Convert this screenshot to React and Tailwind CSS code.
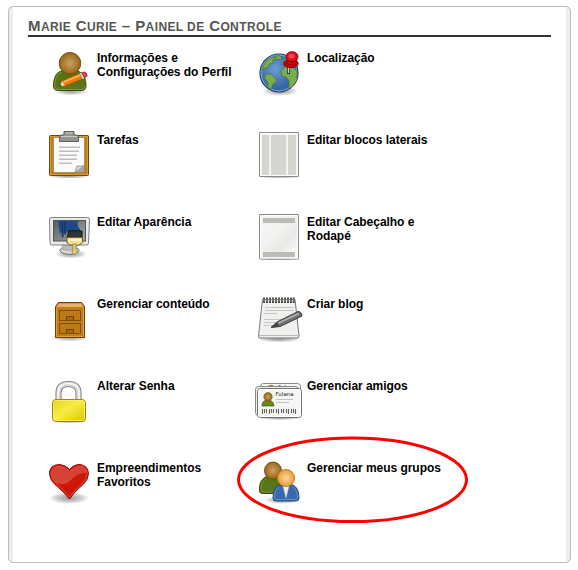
const fontStack = "font-['Liberation_Sans',Arial,sans-serif]";

function Defs() {
  return (
    <svg className="absolute h-0 w-0" aria-hidden="true">
      <defs>
        <radialGradient id="shadow"><stop offset="0" stopColor="#000" stopOpacity=".4" /><stop offset=".6" stopColor="#000" stopOpacity=".2" /><stop offset="1" stopColor="#000" stopOpacity="0" /></radialGradient>
        <radialGradient id="brown"><stop offset="0" stopColor="#cda163" /><stop offset="1" stopColor="#986618" /></radialGradient>
        <radialGradient id="gold"><stop offset="0" stopColor="#f9d59b" /><stop offset="1" stopColor="#e5a03a" /></radialGradient>
        <radialGradient id="ocean" cx=".4" cy=".4"><stop offset="0" stopColor="#6d9cd4" /><stop offset="1" stopColor="#3465a4" /></radialGradient>
        <linearGradient id="green" x1="0" y1="0" x2="0" y2="1"><stop offset="0" stopColor="#55720f" /><stop offset="1" stopColor="#5a7820" /></linearGradient>
        <linearGradient id="paper" x1="0" y1="0" x2="1" y2="1"><stop offset="0" stopColor="#f6f6f5" /><stop offset=".4" stopColor="#f2f2f0" /><stop offset=".65" stopColor="#e9e9e7" /><stop offset="1" stopColor="#fff" /></linearGradient>
        <linearGradient id="yellow" x1="0" y1="0" x2="1" y2="1"><stop offset="0" stopColor="#e6d21c" /><stop offset=".45" stopColor="#f8ec42" /><stop offset="1" stopColor="#dcc500" /></linearGradient>
        <linearGradient id="screen" x1="0" y1="0" x2="1" y2="1"><stop offset="0" stopColor="#565d62" /><stop offset="1" stopColor="#a5a9a8" /></linearGradient>
        <linearGradient id="gloss" x1="0" y1="0" x2="0" y2="1"><stop offset="0" stopColor="#fff" stopOpacity=".18" /><stop offset="1" stopColor="#fff" stopOpacity=".2" /></linearGradient>
      </defs>
    </svg>
  );
}

function Icon({ children }) {
  return <svg className="h-12 w-[52px] shrink-0" viewBox="5 8 52 48">{children}</svg>;
}

function Profile() {
  return (
    <Icon>
      <ellipse cx="31" cy="51" rx="17" ry="4.500" fill="url(#shadow)" />
      <path d="M21 31C16 33 13.500 38 13.500 46q0 4.500 5 4.500H41q5 0 5-4.500C46 38 43 33 38 31Z" fill="url(#green)" stroke="#36500a" />
      <path d="M21.500 32.500C17 34 14.500 40 14.500 46q0 3.500 4 3.500H41q4 0 4-3.500" fill="none" stroke="#84a044" strokeWidth=".8" />
      <circle cx="30" cy="23.300" r="10.800" fill="url(#brown)" stroke="#7a500f" />
      <path d="M19.500 45.800 22.500 40.500 39.500 33.300 42.500 39 25.500 46Z" fill="#f57900" stroke="#9b4a05" strokeWidth=".8" />
      <path d="M23.500 42.200 40 35.300" stroke="#fcaf5e" strokeWidth="2" />
      <path d="m19 46.300 3.500-5.800 3 5.500Z" fill="#f3d6ab" stroke="#8f5902" strokeWidth=".5" />
      <path d="m19 46.300 1.200-2 1.200 1.800Z" fill="#222" />
      <path d="m39.500 33.300 2.200-.9 3 5.600-2.200 1Z" fill="#d3d7cf" />
      <path d="m41.500 32.400 3.500-.4q2 1 2.200 4l-2.500 2Z" fill="#ef3b4e" stroke="#a40000" strokeWidth=".6" />
    </Icon>
  );
}

function Globe() {
  return (
    <Icon>
      <ellipse cx="30" cy="51" rx="18" ry="5" fill="url(#shadow)" />
      <circle cx="29" cy="33" r="19" fill="url(#ocean)" stroke="#23406b" strokeWidth="1.200" />
      <circle cx="29" cy="33" r="17.900" fill="none" stroke="#94b9e4" strokeWidth=".8" />
      <g fill="#7aad4c" stroke="#3f7325" strokeWidth=".6">
        <path d="M12.500 29q1.500-7 8-11l4-1 1 2-3 1 1 3-4 1-2 4-3 0-1 2Z" />
        <path d="m25 16.500 4-1 3 2-2 2-4 0Z" />
        <path d="m16 34 5 0 5 5 0 3-3 2-2 5-2.500-1-1-6-3-4Z" />
        <path d="m31 32 2-4 5-2 6 2 3 3 0 9-4 6-2 2-2-1 0-6-3-4-4-1Z" />
        <path d="m34 20 3-3 5 4 3 4-3 1-6-1-3 0Z" />
      </g>
      <path d="M38.500 27v7" stroke="#2e3436" strokeWidth="3" />
      <path d="M38.500 27v6" stroke="#d3d7cf" strokeWidth="1.300" />
      <ellipse cx="41" cy="23.500" rx="7.200" ry="4.200" fill="#c4000b" stroke="#850000" />
      <path d="M37 17v6q5 4 9.500 0v-6Z" fill="#cc0712" stroke="#850000" strokeWidth=".8" />
      <ellipse cx="42" cy="16.800" rx="6" ry="5" fill="#dc1019" stroke="#900000" />
      <ellipse cx="41.500" cy="16" rx="3.200" ry="2.500" fill="#f94444" />
    </Icon>
  );
}

function Tasks() {
  return (
    <Icon>
      <ellipse cx="29" cy="54" rx="21" ry="3" fill="url(#shadow)" />
      <rect x="9.500" y="13.500" width="39" height="40" rx="1" fill="#c17d11" stroke="#74480a" />
      <rect x="10.500" y="14.500" width="37" height="38" fill="none" stroke="#dca04a" strokeWidth=".8" />
      <path d="M13.500 15.500h31v35h-31Z" fill="#fafafa" stroke="#9c7d49" strokeWidth=".7" />
      <path d="M19 25.200h21M19 29.200h20M19 33.200h18M19 37.200h18M19 41.200h13" stroke="#bcbebb" strokeWidth="1.500" />
      <path d="M35 50.500 37 44q4 1 7.500-.5v7Z" fill="#a7aaa4" stroke="#777" strokeWidth=".5" />
      <path d="m37 44-2 6.500 9.500-7Q40 45 37 44Z" fill="#d9dbd8" stroke="#888" strokeWidth=".6" />
      <path d="M19.500 19.500v-5l1.500-1.500h3v-3.500h10V13h3l1.500 1.500v5Z" fill="#929592" stroke="#5e605d" />
      <path d="M21 14.500h16M25.500 11h7" stroke="#c9cbc8" />
    </Icon>
  );
}

function SideBlocks() {
  return (
    <Icon>
      <ellipse cx="29" cy="54.300" rx="22" ry="2.500" fill="url(#shadow)" />
      <rect x="9.500" y="10.500" width="39" height="44" rx=".5" fill="#f3f3f2" stroke="#888a85" />
      <rect x="10.500" y="11.500" width="37" height="42" fill="none" stroke="#fff" />
      <path d="M12 13h7v40h-7ZM21 13h15v40H21ZM38 13h8v40h-8Z" fill="#d3d7cf" />
    </Icon>
  );
}

function Appearance() {
  return (
    <Icon>
      <ellipse cx="31" cy="50" rx="16" ry="4.500" fill="url(#shadow)" />
      <ellipse cx="29.500" cy="46.500" rx="9.500" ry="3.800" fill="#d7d9d6" stroke="#777975" />
      <path d="m23 41-2 4q8 3 16-1l-2-3Z" fill="#bbbdb9" stroke="#888" strokeWidth=".5" />
      <path d="M11.500 13.500h36q2 0 2 2L48.500 39q0 2-2 2H12q-2 0-2-2L9.500 15.500q0-2 2-2Z" fill="#e9eae8" stroke="#81837f" />
      <rect x="13.500" y="16.500" width="32" height="20.500" fill="url(#screen)" stroke="#50555a" />
      <path d="M18 17h21q-1 3 1 8v5H28l-1-3-2 5-1-5-2 8-1-8-1 4-1-7Z" fill="#204a87" />
      <path d="m22 18 1 15M25 18v12" stroke="#183665" strokeWidth="1.500" />
      <path d="M38 18q-1 4 4 9" fill="none" stroke="#8f9797" />
      <path d="m29 26.500 13 .5v7H27Z" fill="#303236" stroke="#151719" />
      <path d="M27 33.500h15.500v5L39 41l-3 1-1-1h-5l-3-2Z" fill="#eedf9e" stroke="#786124" />
      <path d="M28.500 36h12.500" stroke="#fff9d3" strokeWidth="1.500" />
      <path d="m32.500 40 4 0-.5 4 1.500 4q-3 5-5.500 0l1-4Z" fill="#e2cb78" stroke="#8f7941" strokeWidth=".7" />
    </Icon>
  );
}

function HeaderFooter() {
  return (
    <Icon>
      <ellipse cx="29" cy="55" rx="22" ry="2.500" fill="url(#shadow)" />
      <rect x="9.500" y="10.500" width="39" height="44.500" rx=".5" fill="url(#paper)" stroke="#888a85" />
      <rect x="10.500" y="11.500" width="37" height="42.500" fill="none" stroke="#fff" />
      <path d="M13 14h32v5H13ZM13 48h32v5H13Z" fill="#babdb6" />
    </Icon>
  );
}

function Cabinet() {
  return (
    <Icon>
      <ellipse cx="30" cy="51.500" rx="19" ry="4" fill="url(#shadow)" />
      <path d="m18.500 16.500-3 4v31h29v-31l-3-4Z" fill="#c17d11" stroke="#6b4209" />
      <path d="m19 17.500-2.500 3.500h27L41 17.500Z" fill="#e6b270" />
      <path d="M16.500 21.500v29h27v-29" fill="none" stroke="#dfa452" strokeWidth=".8" />
      <rect x="19.500" y="24.500" width="21" height="10" fill="#bd7a12" stroke="#764a0c" strokeWidth=".9" />
      <rect x="19.500" y="37.500" width="21" height="10" fill="#bd7a12" stroke="#764a0c" strokeWidth=".9" />
      <path d="M26.500 34v-3.500h7V34M26.500 47v-3.500h7V47" fill="#a76810" stroke="#64400c" strokeWidth=".9" />
    </Icon>
  );
}

function Blog() {
  return (
    <Icon>
      <ellipse cx="29" cy="53" rx="22" ry="3.500" fill="url(#shadow)" />
      <path d="M12.500 13.500h32.500l4 36q.2 2.500-2 2.500H10q-2 0-1.500-2.500Z" fill="#f0f0ef" stroke="#777975" />
      <path d="M9 49.500h39.500" stroke="#b8bab6" />
      <path d="M15 21.500h29M15 24.500h29M14 27.500h13M14 33.500h26M14 36.500h22M13.500 39.500h16" stroke="#c4c6c3" />
      <path d="M14 11.500v5.500m3-5.500v5.500m3-5.500v5.500m3-5.500v5.500m3-5.500v5.500m3-5.500v5.500m3-5.500v5.500m3-5.500v5.500m3-5.500v5.500m3-5.500v5.500m2.800-5.500v5.500" stroke="#40433f" strokeWidth="2" />
      <path d="M14 12.500v3m3-3v3m3-3v3m3-3v3m3-3v3m3-3v3m3-3v3m3-3v3m3-3v3m3-3v3m2.800-3v3" stroke="#a9aba7" strokeWidth=".9" />
      <path d="m21 41.500 6-5.500L48 25.500q3.500 0 4 4.500L30 40.500Z" fill="#70736f" stroke="#363936" />
      <path d="m28.500 37 20-9.500" stroke="#b3b5b1" strokeWidth="1.500" />
      <path d="m21 41.500 6-5 2.500 4Z" fill="#444" />
    </Icon>
  );
}

function Lock() {
  return (
    <Icon>
      <ellipse cx="29" cy="53" rx="18" ry="2.500" fill="url(#shadow)" />
      <path d="M18.500 34V25q0-9 10-9t10 9v9" fill="none" stroke="#777975" strokeWidth="6" />
      <path d="M18.500 34V25q0-9 10-9t10 9v9" fill="none" stroke="#d3d7cf" strokeWidth="4.300" />
      <path d="M18 33V25q0-9.500 10.500-9.500t10.500 9.500v7" fill="none" stroke="#fafafa" strokeWidth="1.500" />
      <rect x="12.500" y="31.500" width="33" height="22" rx="3.500" fill="url(#yellow)" stroke="#a28405" />
      <rect x="13.500" y="32.500" width="31" height="20" rx="2.500" fill="none" stroke="#fff36b" strokeWidth=".8" />
    </Icon>
  );
}

function Friends() {
  return (
    <Icon>
      <rect x="10.500" y="15.500" width="40" height="28" rx="3" fill="#f5f5f4" stroke="#868884" />
      <circle cx="21" cy="21" r="4" fill="#a76813" />
      <text x="28" y="21" className="font-['DejaVu_Sans']" fontSize="5.500" fill="#333">Fulana</text>
      <rect x="5.500" y="18.500" width="43" height="29" rx="3" fill="#eee" stroke="#868884" />
      <ellipse cx="30" cy="50" rx="22" ry="2" fill="url(#shadow)" />
      <rect x="7.500" y="20.500" width="44" height="29" rx="3" fill="#f5f5f4" stroke="#6e716c" />
      <rect x="8.500" y="21.500" width="42" height="27" rx="2" fill="none" stroke="#fff" />
      <path d="M12 38q0-6 5.500-6 6 0 6.500 6Z" fill="#68861c" stroke="#405a0a" strokeWidth=".7" />
      <circle cx="18" cy="28.800" r="4.200" fill="url(#brown)" stroke="#784908" strokeWidth=".6" />
      <text x="25.500" y="28.400" className="font-['DejaVu_Sans']" fontSize="5.500" fill="#222">Fulana</text>
      <path d="M26 31.500h17M26 34.500h13" stroke="#c0c2bf" />
      <path d="M12.500 41v5m2-5v4m2-4v4m3-4v5m2-5v4m2-4v4m3-4v4m2-4v5m3-5v4m2-4v4m3-4v4m2-4v5m3-5v4m2-4v4m2-4v5" stroke="#646662" strokeWidth="1.100" />
    </Icon>
  );
}

function Heart() {
  return (
    <Icon>
      <ellipse cx="29" cy="48" rx="20" ry="6" fill="url(#shadow)" />
      <path d="M29.500 49Q24 42 15 34.500q-5.500-5-5.500-11 0-8.500 9.500-9 6 0 10.500 5 4-5 10.500-5 8 1 8.500 9 0 6-5.500 11Q34 42 29.500 49Z" fill="#cc1706" stroke="#8d0c0c" />
      <path d="M29.500 47Q24 40.500 16 33.500q-5-4.500-5-10 0-7 8-7.500 6 0 10.500 5.500Q34 16 40 16q7 .5 7 7.500 0 5.500-5 10Q34 41 29.500 47Z" fill="none" stroke="#e8544a" strokeWidth=".8" />
      <path d="M11.500 24q0-7 7.500-7.500 6 0 10.500 5.500 5-6 10.500-5.500 6 .5 6.500 6Q37 23 31 30q-5 6-15 3-4-4-4.500-9Z" fill="url(#gloss)" />
    </Icon>
  );
}

function Groups() {
  return (
    <Icon>
      <ellipse cx="32" cy="50" rx="18" ry="4" fill="url(#shadow)" />
      <path d="M17 26Q9.500 30 9.500 38v3q0 2.500 3 2.500H29L35 30l-6-4Z" fill="url(#green)" stroke="#36500a" />
      <path d="M16 28.500q-5 4-5 11 0 2.500 3 2.500h10" fill="none" stroke="#84a044" strokeWidth=".7" />
      <circle cx="23" cy="20.500" r="8.500" fill="url(#brown)" stroke="#7a500f" />
      <path d="M29 35q-6 3-6 13 0 3 3 3h20q3 0 3-3 0-10-6-13Z" fill="#3969ad" stroke="#204a87" />
      <path d="M29 36.500q-4.500 4-4.500 11 0 2 2 2h19q2 0 2-2 0-7-4.500-11" fill="none" stroke="#7ba1d2" strokeWidth=".7" />
      <path d="m33 36 3 12 3-12Z" fill="#eee" stroke="#c5d0dd" strokeWidth=".5" />
      <circle cx="36" cy="28" r="8.500" fill="url(#gold)" stroke="#c17d11" />
    </Icon>
  );
}

const items = [
  [Profile, ["Informações e", "Configurações do Perfil"]],
  [Globe, ["Localização"]],
  [Tasks, ["Tarefas"]],
  [SideBlocks, ["Editar blocos laterais"]],
  [Appearance, ["Editar Aparência"]],
  [HeaderFooter, ["Editar Cabeçalho e", "Rodapé"]],
  [Cabinet, ["Gerenciar conteúdo"]],
  [Blog, ["Criar blog"]],
  [Lock, ["Alterar Senha"]],
  [Friends, ["Gerenciar amigos"]],
  [Heart, ["Empreendimentos", "Favoritos"]],
  [Groups, ["Gerenciar meus grupos"]],
];

function Cap({ children }) {
  return <span className="text-[15px]">{children}</span>;
}

export default function App() {
  return (
    <div className={`relative h-[570px] w-[578px] overflow-hidden bg-white pt-[6px] pl-2 ${fontStack}`}>
      <Defs />
      <main className="h-[557px] w-[563px] overflow-hidden rounded-[5px] border border-[#babdb6] bg-[#eeeeec] px-1">
        <div className="h-full bg-white px-[15px]">
          <h1 className="h-[30px] border-b-2 border-[#2e3436] pt-[9px] text-[12px] leading-[20px] font-bold tracking-[0.4px] whitespace-nowrap text-[#555753] uppercase">
            <Cap>M</Cap>arie<Cap> C</Cap>urie<Cap> – P</Cap>ainel de<Cap> C</Cap>ontrole
          </h1>
          <div className="grid auto-rows-[82px] grid-cols-[210px_210px] pt-[11px] pl-[17px]">
            {items.map(([Drawing, lines]) => (
              <a key={lines[0]} className="flex items-start">
                <Drawing />
                <span className="pt-[3px] text-[12px] leading-[14px] font-bold tracking-[-0.04px] whitespace-nowrap text-black">
                  {lines.map((line) => <span key={line} className="block">{line}</span>)}
                </span>
              </a>
            ))}
          </div>
        </div>
      </main>
      <svg className="absolute top-[434px] left-[234px] h-[92px] w-[238px]" viewBox="234 434 238 92">
        <ellipse cx="352.500" cy="479.800" rx="114" ry="41.800" fill="none" stroke="#f00" strokeWidth="3" />
      </svg>
    </div>
  );
}
